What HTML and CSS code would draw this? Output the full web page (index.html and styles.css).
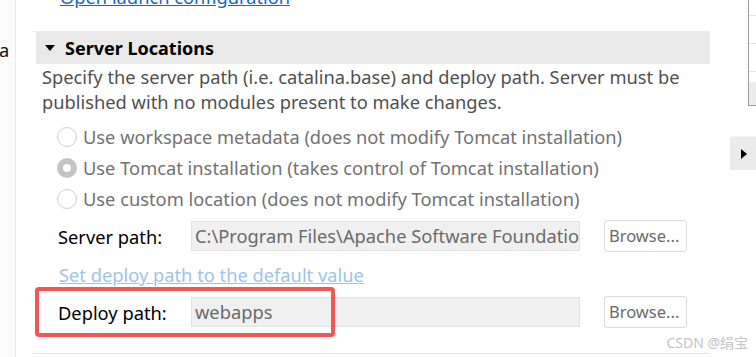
FILE: index.html
```html
<!DOCTYPE html>
<html lang="en">
<head>
    <meta charset="UTF-8">
    <meta name="viewport" content="width=device-width, initial-scale=1.0">
    <link rel="stylesheet" href="styles.css">
</head>
<body>
<div class="page">
    <div class="side">
        <span class="side-letter">a</span>
    </div>
    <div class="content">
        <div class="top-link"><a href="#">Open launch configuration</a></div>
        <div class="section">
            <div class="section-header">
                <span class="twisty"></span>
                <span class="section-title">Server Locations</span>
            </div>
            <p class="section-desc">Specify the server path (i.e. catalina.base) and deploy path. Server must be published with no modules present to make changes.</p>
            <div class="radios">
                <label class="radio"><span class="radio-dot"></span>Use workspace metadata (does not modify Tomcat installation)</label>
                <label class="radio"><span class="radio-dot checked"></span>Use Tomcat installation (takes control of Tomcat installation)</label>
                <label class="radio"><span class="radio-dot"></span>Use custom location (does not modify Tomcat installation)</label>
            </div>
            <div class="field-row">
                <span class="field-label">Server path:</span>
                <div class="field-input">C:\Program Files\Apache Software Foundation\Tomcat 9.0</div>
                <div class="browse">Browse...</div>
            </div>
            <a href="#" class="default-link">Set deploy path to the default value</a>
            <div class="field-row deploy">
                <span class="field-label">Deploy path:</span>
                <div class="field-input">webapps</div>
                <div class="browse">Browse...</div>
                <div class="highlight"></div>
            </div>
        </div>
        <div class="next-section"></div>
    </div>
    <div class="right">
        <div class="right-table">
            <div></div>
            <div></div>
            <div></div>
            <div class="right-fill"></div>
        </div>
        <div class="right-btn"><span class="right-arrow"></span></div>
    </div>
    <div class="watermark">CSDN @绢宝</div>
</div>
</body>
</html>
```

FILE: styles.css
```css
* {
    box-sizing: border-box;
}
body {
    margin: 0;
    font-family: 'Noto Sans', 'Noto Sans CJK SC', sans-serif;
    font-size: 18.3px;
    background: white;
}
.page {
    position: relative;
    display: flex;
    width: 756px;
    height: 357px;
    overflow: hidden;
}
.side {
    width: 16px;
    flex-shrink: 0;
    background: #fbfbfb;
    border-right: 1px solid #e8e8e8;
    padding-top: 38px;
}
.side-letter {
    display: block;
    margin-left: -1px;
    color: #111;
    line-height: 24px;
}
.content {
    flex: 1;
    display: flex;
    flex-direction: column;
    padding-left: 17px;
}
.top-link {
    height: 45px;
    margin-top: -14px;
    padding-left: 27px;
    line-height: 22px;
}
.top-link a {
    color: #1565c8;
}
.section {
    position: relative;
    width: 677px;
    border-top: 1px solid #ececec;
}
.section-header {
    display: flex;
    align-items: center;
    gap: 10px;
    height: 32px;
    margin-left: 3px;
    padding-left: 9px;
    background: #e9e9e9;
}
.twisty {
    width: 0;
    height: 0;
    border-left: 5px solid transparent;
    border-right: 5px solid transparent;
    border-top: 6px solid #000;
}
.section-title {
    font-weight: bold;
    font-size: 18px;
    color: #000;
}
.section-desc {
    margin: 0;
    padding: 0 0 0 9px;
    line-height: 25px;
    color: #505050;
}
.radios {
    display: flex;
    flex-direction: column;
    padding: 7px 0 0 24px;
}
.radio {
    display: flex;
    align-items: center;
    gap: 6px;
    height: 31px;
    color: #727272;
}
.radio-dot {
    width: 20px;
    height: 20px;
    border-radius: 50%;
    border: 1px solid #cfcfcf;
    background: #fff;
}
.radio-dot.checked {
    border: 6px solid #c4c4c4;
}
.field-row {
    position: relative;
    display: flex;
    align-items: center;
    height: 32px;
    margin-top: 6px;
    padding-left: 25px;
}
.field-label {
    width: 133px;
    color: #000;
}
.field-input {
    width: 389px;
    height: 30px;
    padding-left: 3px;
    line-height: 28px;
    background: #f0f0f0;
    border: 1px solid #e2e2e2;
    color: #6a6a6a;
    white-space: nowrap;
    overflow: hidden;
}
.browse {
    margin-left: 24px;
    width: 83px;
    height: 32px;
    line-height: 30px;
    padding-left: 4px;
    border: 1px solid #dcdcdc;
    border-radius: 3px;
    font-size: 16.5px;
    color: #6a6a6a;
    white-space: nowrap;
}
.default-link {
    display: block;
    margin: 11px 0 0 26px;
    line-height: 24px;
    color: #9cc4ec;
}
.field-row.deploy {
    margin-top: 9px;
}
.highlight {
    position: absolute;
    left: 2px;
    top: -9px;
    width: 300px;
    height: 50px;
    border: 4px solid #f35656;
    border-radius: 4px;
}
.next-section {
    margin-top: 25px;
    width: 677px;
    border-top: 1px solid #e6e6e6;
}
.right {
    width: 26px;
    flex-shrink: 0;
    display: flex;
    flex-direction: column;
    align-items: flex-end;
}
.right-table {
    width: 8px;
    height: 106px;
    border-left: 1px solid #9a9a9a;
    border-bottom: 1px solid #9a9a9a;
    display: flex;
    flex-direction: column;
}
.right-table div {
    height: 28px;
    border-bottom: 1px solid #e4e4e4;
}
.right-table div:first-child {
    height: 16px;
}
.right-table .right-fill {
    flex: 1;
    margin-top: 10px;
    background: #ececec;
    border: none;
}
.right-btn {
    margin-top: 30px;
    width: 26px;
    height: 34px;
    background: #ebebeb;
    border-top: 1px solid #f5f5f5;
    display: flex;
    align-items: center;
    padding-left: 11px;
}
.right-arrow {
    width: 0;
    height: 0;
    border-top: 5px solid transparent;
    border-bottom: 5px solid transparent;
    border-left: 6px solid #000;
}
.watermark {
    position: absolute;
    right: 8px;
    bottom: 5px;
    font-size: 14px;
    color: #c4c4c4;
}
```
